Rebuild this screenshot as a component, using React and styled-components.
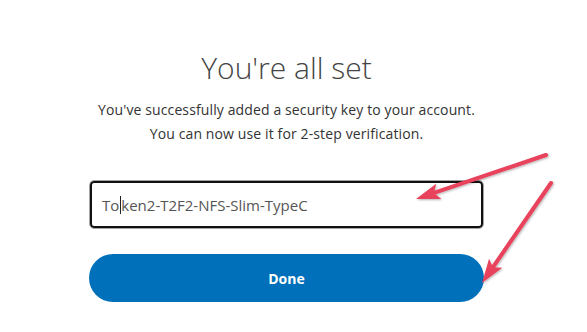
import React from 'react'
import styled, { createGlobalStyle } from 'styled-components'

const GlobalStyle = createGlobalStyle`
  html, body {
    margin: 0;
    padding: 0;
    background: #fff;
  }
  body {
    font-family: 'Open Sans', 'Noto Sans', sans-serif;
    -webkit-font-smoothing: antialiased;
  }
`

const Page = styled.div`
  position: relative;
  width: 587px;
  height: 332px;
  overflow: hidden;
  background: #fff;
`

const Column = styled.div`
  display: flex;
  flex-direction: column;
  align-items: stretch;
  width: 395px;
  margin-left: 89px;
  padding-top: 48px;
`

const Title = styled.h1`
  margin: 0;
  text-align: center;
  font-family: 'Open Sans', sans-serif;
  font-weight: 300;
  font-size: 30px;
  line-height: 40px;
  color: #444;
`

const Message = styled.p`
  margin: 10px 0 0;
  text-align: center;
  font-family: 'Open Sans', sans-serif;
  font-size: 14px;
  line-height: 24px;
  letter-spacing: 0.12px;
  color: #333;
`

const Field = styled.div`
  box-sizing: border-box;
  display: flex;
  align-items: center;
  height: 49px;
  margin-top: 34px;
  padding: 0 12px;
  border: 1px solid #a3a3a3;
  border-radius: 5px;
  box-shadow: inset 0 0 0 2px #111;
  font-family: 'Open Sans', sans-serif;
  font-size: 15px;
  color: #555;
  white-space: pre;
`

const Caret = styled.span`
  display: inline-block;
  width: 1px;
  height: 18px;
  margin: 0 0.5px;
  background: #222;
`

const DoneButton = styled.button`
  box-sizing: border-box;
  height: 48px;
  margin-top: 25px;
  border: none;
  border-radius: 24px;
  background: #0070ba;
  color: #fff;
  font-family: 'Open Sans', sans-serif;
  font-weight: 700;
  font-size: 14px;
  cursor: pointer;
`

const Overlay = styled.svg`
  position: absolute;
  left: 0;
  top: 0;
  pointer-events: none;
`

const arrows = [
  { from: [546, 155], to: [416, 199] },
  { from: [551, 183], to: [482, 283] }
]

function Arrow ({ from, to }) {
  const [x1, y1] = from
  const [x2, y2] = to
  const len = Math.hypot(x2 - x1, y2 - y1)
  const ux = (x2 - x1) / len
  const uy = (y2 - y1) / len
  const head = 24
  const half = 8
  const bx = x2 - ux * head
  const by = y2 - uy * head
  const nx = bx + ux * 5
  const ny = by + uy * 5
  const points = [
    [x2, y2],
    [bx - uy * half, by + ux * half],
    [nx, ny],
    [bx + uy * half, by - ux * half]
  ].map(p => p.join(',')).join(' ')

  return (
    <g>
      <line x1={x1} y1={y1} x2={nx} y2={ny} stroke='#e8425b' strokeWidth='4' strokeLinecap='round' />
      <polygon points={points} fill='#e8425b' />
    </g>
  )
}

export default function App () {
  return (
    <Page>
      <GlobalStyle />
      <Column>
        <Title>You're all set</Title>
        <Message>
          You've successfully added a security key to your account.
          <br />
          You can now use it for 2-step verification.
        </Message>
        <Field>
          To<Caret />ken2-T2F2-NFS-Slim-TypeC
        </Field>
        <DoneButton>Done</DoneButton>
      </Column>
      <Overlay width='587' height='332'>
        <defs>
          <filter id='shadow' x='-10%' y='-10%' width='120%' height='120%'>
            <feDropShadow dx='1' dy='1' stdDeviation='0.8' floodColor='#000' floodOpacity='0.3' />
          </filter>
        </defs>
        <g filter='url(#shadow)'>
          {arrows.map((a, i) => <Arrow key={i} {...a} />)}
        </g>
      </Overlay>
    </Page>
  )
}
